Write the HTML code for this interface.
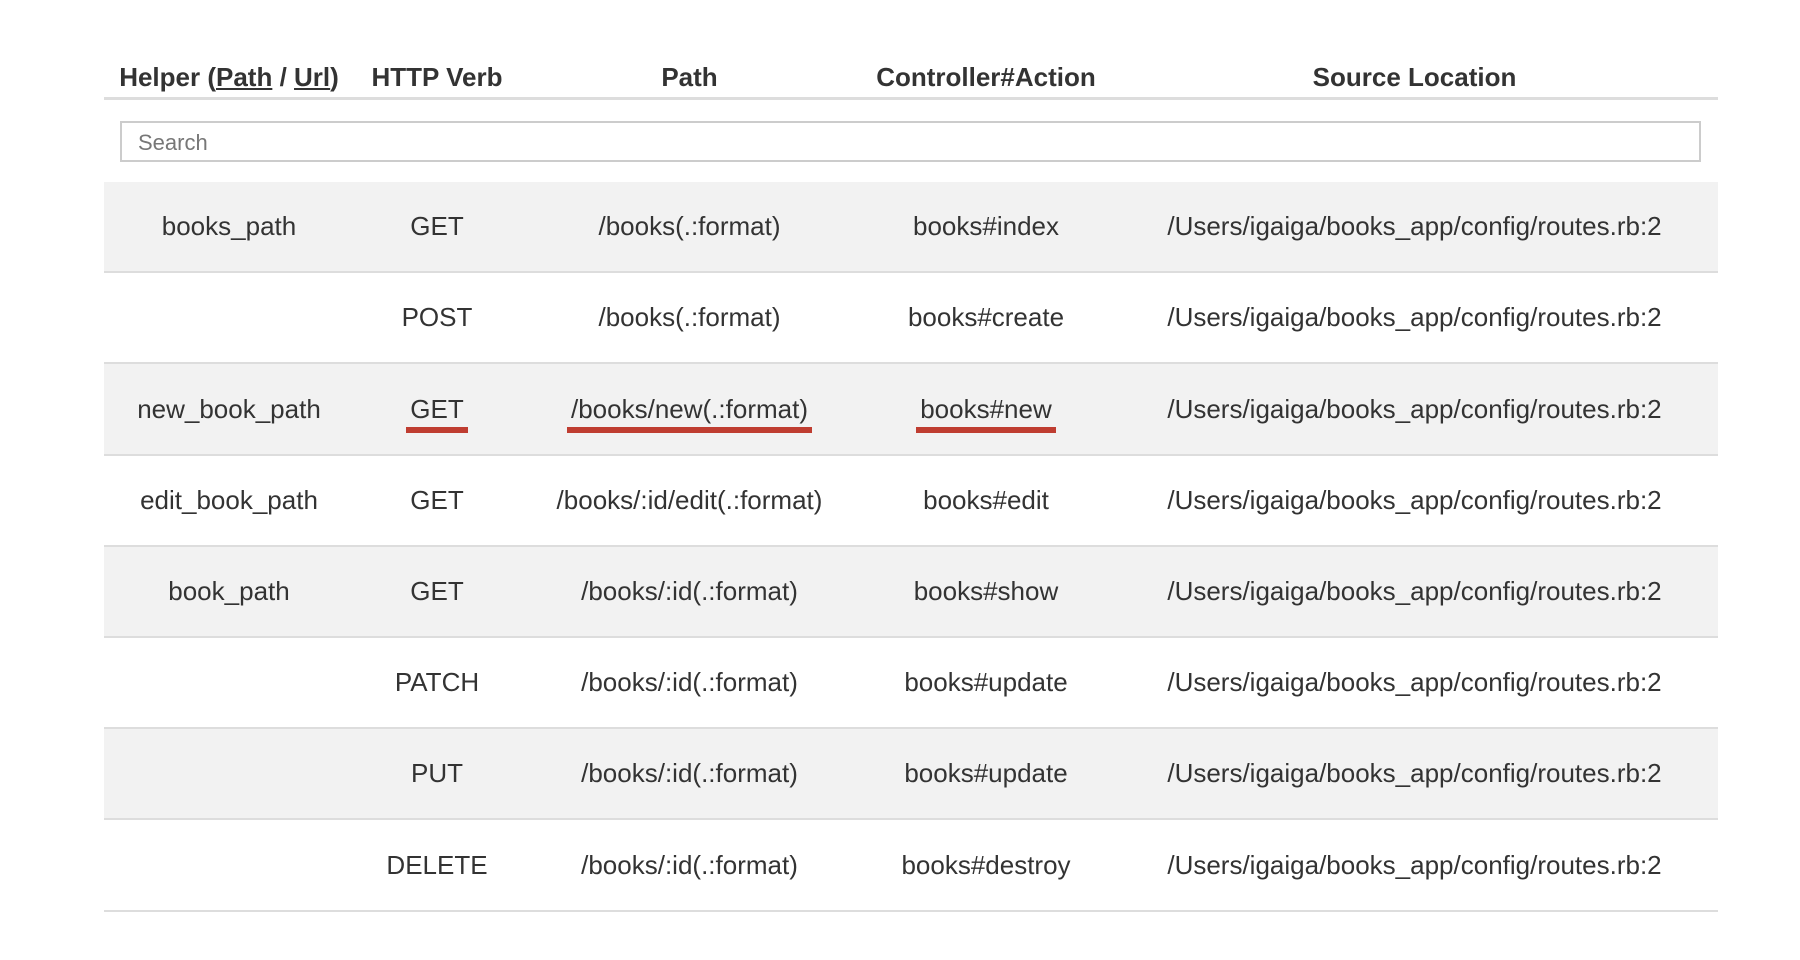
<!DOCTYPE html>
<html><head><meta charset="utf-8"><style>
*{margin:0;padding:0;box-sizing:border-box}
body{width:1800px;height:960px;background:#fff;font-family:"Liberation Sans",Arial,sans-serif;color:#333;position:relative;overflow:hidden}
.row{position:absolute;left:104px;width:1614px;height:91px;border-bottom:2px solid #ddd;display:flex;align-items:center}
.row.g{background:#f2f2f2}
.c{text-align:center;font-size:26px;white-space:nowrap}
.c1{width:250px}.c2{width:166px}.c3{width:339px}.c4{width:254px}.c5{width:603px}
.hd{position:absolute;left:104px;top:62px;width:1614px;height:38px;border-bottom:3px solid #ddd;display:flex;align-items:flex-start;font-weight:bold}
.hd .c{font-size:26px}
.hd a{color:#333;text-decoration:underline}
.u{display:inline-block;position:relative}
.u:after{content:"";position:absolute;left:-4px;right:-4px;bottom:-8px;height:6px;background:#bf3d31}
.search{position:absolute;left:120px;top:121px;width:1581px;height:41px;border:2px solid #ccc;background:#fff;font-size:22px;color:#777;padding:7px 0 0 16px}
</style></head><body>
<div class="hd"><div class="c c1">Helper (<a>Path</a> / <a>Url</a>)</div><div class="c c2">HTTP Verb</div><div class="c c3">Path</div><div class="c c4">Controller#Action</div><div class="c c5">Source Location</div></div>
<div class="search">Search</div>

<div class="row g" style="top:182px"><div class="c c1">books_path</div><div class="c c2">GET</div><div class="c c3">/books(.:format)</div><div class="c c4">books#index</div><div class="c c5">/Users/igaiga/books_app/config/routes.rb:2</div></div>
<div class="row" style="top:273px"><div class="c c1"></div><div class="c c2">POST</div><div class="c c3">/books(.:format)</div><div class="c c4">books#create</div><div class="c c5">/Users/igaiga/books_app/config/routes.rb:2</div></div>
<div class="row g" style="top:364px;height:92px"><div class="c c1">new_book_path</div><div class="c c2"><span class="u">GET</span></div><div class="c c3"><span class="u">/books/new(.:format)</span></div><div class="c c4"><span class="u">books#new</span></div><div class="c c5">/Users/igaiga/books_app/config/routes.rb:2</div></div>
<div class="row" style="top:456px"><div class="c c1">edit_book_path</div><div class="c c2">GET</div><div class="c c3">/books/:id/edit(.:format)</div><div class="c c4">books#edit</div><div class="c c5">/Users/igaiga/books_app/config/routes.rb:2</div></div>
<div class="row g" style="top:547px"><div class="c c1">book_path</div><div class="c c2">GET</div><div class="c c3">/books/:id(.:format)</div><div class="c c4">books#show</div><div class="c c5">/Users/igaiga/books_app/config/routes.rb:2</div></div>
<div class="row" style="top:638px"><div class="c c1"></div><div class="c c2">PATCH</div><div class="c c3">/books/:id(.:format)</div><div class="c c4">books#update</div><div class="c c5">/Users/igaiga/books_app/config/routes.rb:2</div></div>
<div class="row g" style="top:729px"><div class="c c1"></div><div class="c c2">PUT</div><div class="c c3">/books/:id(.:format)</div><div class="c c4">books#update</div><div class="c c5">/Users/igaiga/books_app/config/routes.rb:2</div></div>
<div class="row" style="top:820px;height:92px"><div class="c c1"></div><div class="c c2">DELETE</div><div class="c c3">/books/:id(.:format)</div><div class="c c4">books#destroy</div><div class="c c5">/Users/igaiga/books_app/config/routes.rb:2</div></div>
</body></html>
